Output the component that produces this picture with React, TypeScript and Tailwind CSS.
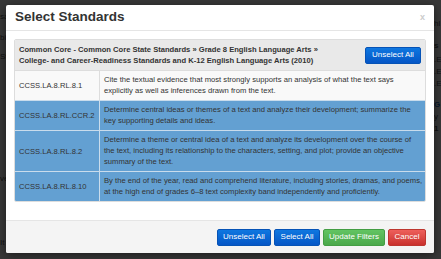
import React from "react";

const rows = [
  {
    code: "CCSS.LA.8.RL.8.1",
    lines: [
      "Cite the textual evidence that most strongly supports an analysis of what the text says",
      "explicitly as well as inferences drawn from the text.",
    ],
    selected: false,
  },
  {
    code: "CCSS.LA.8.RL.CCR.2",
    lines: [
      "Determine central ideas or themes of a text and analyze their development; summarize the",
      "key supporting details and ideas.",
    ],
    selected: true,
  },
  {
    code: "CCSS.LA.8.RL.8.2",
    lines: [
      "Determine a theme or central idea of a text and analyze its development over the course of",
      "the text, including its relationship to the characters, setting, and plot; provide an objective",
      "summary of the text.",
    ],
    selected: true,
  },
  {
    code: "CCSS.LA.8.RL.8.10",
    lines: [
      "By the end of the year, read and comprehend literature, including stories, dramas, and poems,",
      "at the high end of grades 6–8 text complexity band independently and proficiently.",
    ],
    selected: true,
  },
];

export default function App() {
  return (
    <div className="relative h-[259px] w-[441px] overflow-hidden bg-white font-['Liberation_Sans',Arial,sans-serif] text-[#333]">
      {/* Page behind the modal */}
      <div className="flex h-full justify-between text-[8px] leading-[12px]">
        <div className="flex flex-col pt-[11px] text-[#555]">
          <span>sa</span>
          <span className="mt-[9px]">bi</span>
          <span className="mt-[7px]">St</span>
          <span className="mt-[110px]">ve</span>
          <span className="mt-[52px]">It</span>
        </div>
        <div className="flex w-[7px] flex-col pt-[18px] text-[#555]">
          <span>hl</span>
          <span className="mt-[10px] font-bold">s</span>
          <span className="mt-[2px]">.E</span>
          <span>.E</span>
          <span>.E</span>
          <span className="mt-[9px] font-bold text-[#2a6ebb]">G</span>
          <span>y</span>
          <span className="font-bold">1</span>
        </div>
      </div>

      {/* Overlay */}
      <div className="absolute inset-0 bg-black/[0.78] pl-[6px] pt-[5px]">
        <div className="flex h-[248px] w-[428px] flex-col overflow-hidden rounded-[2px] bg-white shadow-[0_2px_10px_rgba(0,0,0,0.5)]">
          {/* Header */}
          <div className="flex h-[26px] items-center justify-between border-b border-[#e5e5e5] pl-[9px] pr-[9px]">
            <h1 className="text-[13.5px] font-bold text-[#333]">Select Standards</h1>
            <span className="text-[9px] font-bold text-[#ccc]">x</span>
          </div>

          {/* Body */}
          <div className="flex-1 px-[8px] pt-[8px]">
            <div className="overflow-hidden rounded-[2px] border border-[#ddd]">
              <div className="flex h-[31px] items-center justify-between border-b border-[#ddd] bg-[#e9e9e9] pl-[4px] pr-[4px]">
                <div className="text-[7.6px] font-bold leading-[11px] text-[#333]">
                  <div>Common Core - Common Core State Standards » Grade 8 English Language Arts »</div>
                  <div>College- and Career-Readiness Standards and K-12 English Language Arts (2010)</div>
                </div>
                <button className="h-[17px] w-[56px] rounded-[2px] border border-[#0653b6] bg-gradient-to-b from-[#0f77e0] to-[#0656c6] text-[8px] text-white">
                  Unselect All
                </button>
              </div>
              {rows.map((r, i) => (
                <div
                  key={r.code}
                  className={`flex ${i > 0 ? "border-t" : ""} ${
                    r.selected ? "border-[#c9dcec] bg-[#63a0d2]" : "border-[#ddd] bg-[#f9f9f9]"
                  }`}
                >
                  <div
                    className={`flex w-[85px] shrink-0 items-center border-r pl-[4px] text-[7.6px] ${
                      r.selected ? "border-[#c9dcec]" : "border-[#ddd]"
                    }`}
                  >
                    {r.code}
                  </div>
                  <div className="min-w-0 flex-1 py-[4px] pl-[4px] text-[7.65px] leading-[10.6px]">
                    {r.lines.map((l) => (
                      <div key={l} className="whitespace-nowrap">
                        {l}
                      </div>
                    ))}
                  </div>
                </div>
              ))}
            </div>
          </div>

          {/* Footer */}
          <div className="flex h-[33px] items-center justify-end gap-[3px] border-t border-[#e5e5e5] bg-[#f4f4f4] pr-[8px]">
            <button className="h-[17px] w-[54px] rounded-[2px] border border-[#0653b6] bg-gradient-to-b from-[#0f77e0] to-[#0656c6] text-[8px] text-white">
              Unselect All
            </button>
            <button className="h-[17px] w-[46px] rounded-[2px] border border-[#0653b6] bg-gradient-to-b from-[#0f77e0] to-[#0656c6] text-[8px] text-white">
              Select All
            </button>
            <button className="h-[17px] w-[62px] rounded-[2px] border border-[#449d44] bg-gradient-to-b from-[#62c462] to-[#4ba84b] text-[8px] text-white">
              Update Filters
            </button>
            <button className="h-[17px] w-[38px] rounded-[2px] border border-[#bd362f] bg-gradient-to-b from-[#ee5f5b] to-[#c9302c] text-[8px] text-white">
              Cancel
            </button>
          </div>
        </div>
      </div>
    </div>
  );
}
